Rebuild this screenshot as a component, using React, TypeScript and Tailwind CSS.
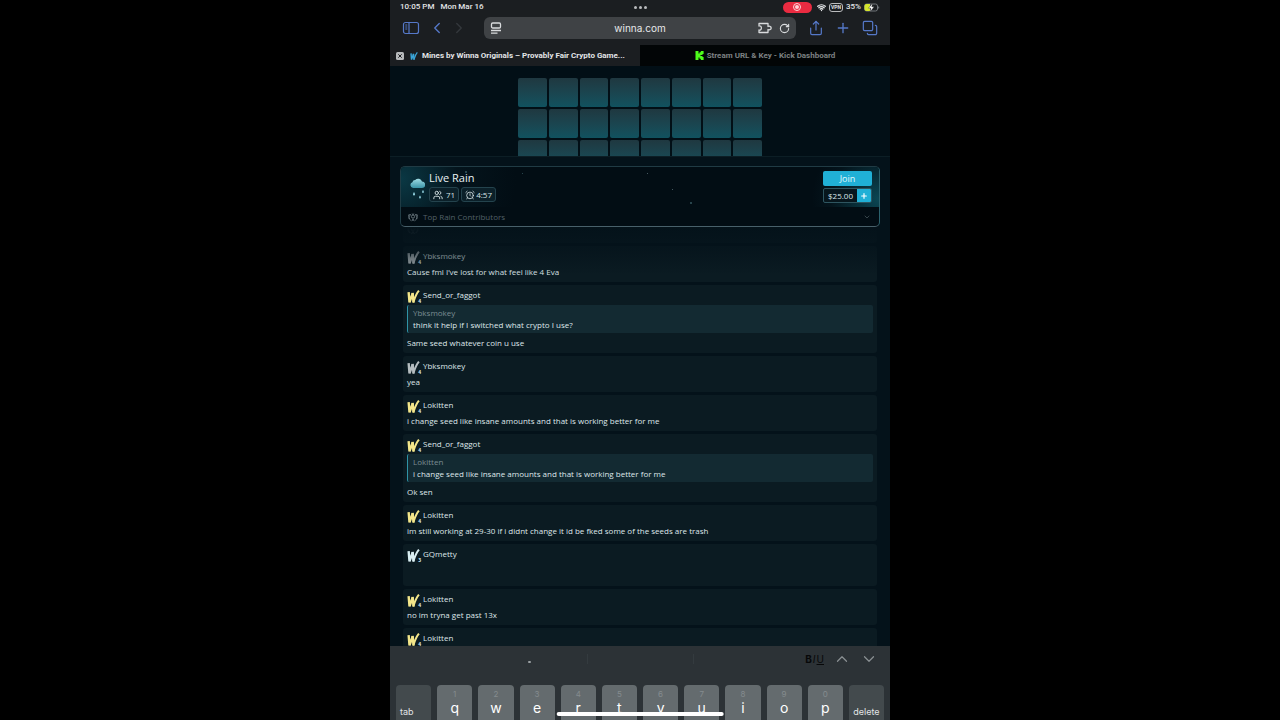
import React, { FC } from 'react';
import {
  AlarmClock,
  ChevronDown,
  ChevronLeft,
  ChevronRight,
  ChevronUp,
  Copy,
  Plus,
  RotateCw,
  Share,
  Users,
  Wifi,
} from 'lucide-react';

type Message = {
  id: number;
  name: string;
  color: string;
  level: string;
  text: string;
  quote?: { name: string; text: string };
};

const messages: Message[] = [
  { id: 1, name: 'Ybksmokey', color: '#b4bcbf', level: '4', text: 'Cause fml I’ve lost for what feel like 4 Eva' },
  {
    id: 2,
    name: 'Send_or_faggot',
    color: '#f3e68a',
    level: '4',
    text: 'Same seed whatever coin u use',
    quote: { name: 'Ybksmokey', text: 'think it help if I switched what crypto I use?' },
  },
  { id: 3, name: 'Ybksmokey', color: '#b4bcbf', level: '4', text: 'yea' },
  { id: 4, name: 'Lokitten', color: '#f3e68a', level: '4', text: 'i change seed like insane amounts and that is working better for me' },
  {
    id: 5,
    name: 'Send_or_faggot',
    color: '#f3e68a',
    level: '4',
    text: 'Ok sen',
    quote: { name: 'Lokitten', text: 'i change seed like insane amounts and that is working better for me' },
  },
  {
    id: 6,
    name: 'Lokitten',
    color: '#f3e68a',
    level: '4',
    text: 'im still working at 29-30 if i didnt change it id be fked some of the seeds are trash',
  },
  { id: 7, name: 'GQmetty', color: '#d9eef2', level: '3', text: '' },
  { id: 8, name: 'Lokitten', color: '#f3e68a', level: '4', text: 'no im tryna get past 13x' },
  { id: 9, name: 'Lokitten', color: '#f3e68a', level: '4', text: '' },
];

const keys = ['q', 'w', 'e', 'r', 't', 'y', 'u', 'i', 'o', 'p'];
const tiles = Array.from({ length: 24 }, (_, i) => i);

const WinnaMark: FC<{ color: string; className?: string }> = ({ color, className }) => (
  <svg viewBox="0 0 12 12" className={className} fill="none" stroke={color} strokeLinejoin="bevel">
    <path d="M1.500 2 2.300 11.400 5.300 3" strokeWidth="2.200" />
    <path d="M5.200 2.600 6 11.400" strokeWidth="2.200" />
    <path d="M5.800 11.600C7 8 8 4 11 .6" strokeWidth="1.900" />
  </svg>
);

const KickMark: FC = () => (
  <svg viewBox="0 0 9 9" className="size-[9px]" fill="#4dfb1a">
    <rect x="0.500" y="0" width="3" height="9" />
    <rect x="3" y="2.500" width="2.500" height="4" />
    <rect x="4.500" y="1.200" width="3" height="2.800" />
    <rect x="4.500" y="5" width="3" height="2.800" />
    <rect x="5.800" y="0" width="2.800" height="3" />
    <rect x="5.800" y="6" width="2.800" height="3" />
  </svg>
);

const RainCloud: FC = () => (
  <svg viewBox="0 0 16 24" className="h-6 w-4 shrink-0">
    <defs>
      <linearGradient id="cloud" x1="0" y1="0" x2="0" y2="1">
        <stop offset="0" stopColor="#9fdce4" />
        <stop offset="1" stopColor="#3a95a8" />
      </linearGradient>
    </defs>
    <path d="M4 13A3 3 0 0 1 3.400 7.200 2.800 2.800 0 0 1 6.200 5 4 4 0 0 1 13 6.600 3.200 3.200 0 0 1 13 13Z" fill="url(#cloud)" />
    <path d="M5 17c1.300 1.800 1.300 3.400 0 3.600-1.300-.2-1.200-1.800 0-3.600ZM14 15c1.100 1.600 1.100 2.800 0 3-1.100-.2-1.100-1.400 0-3ZM11 20.500c1.100 1.600 1.100 2.800 0 3-1.100-.2-1.100-1.400 0-3Z" fill="#9adcea" />
  </svg>
);

const Laurel: FC<{ className?: string }> = ({ className }) => (
  <svg viewBox="0 0 12 12" className={className} fill="none" stroke="#65737a" strokeWidth="1.200">
    <circle cx="6" cy="5.500" r="1.900" />
    <path d="M4.500 11 6 8.500 7.500 11M3.400 10C.8 8.800.6 5 1.600 2.400M8.600 10c2.600-1.200 2.800-5 1.800-7.600" />
    <path d="M.4 4.400 2 5.200M.6 7.200l1.800.2M11.600 4.400 10 5.200M11.400 7.200l-1.800.2M3 2.500l-.6 2M9 2.500l.6 2M4.600 2.200 6 3l1.400-.8" />
  </svg>
);

const StatusBar: FC = () => (
  <div className="grid h-[14px] grid-cols-3 items-center px-[10px] text-[8px] leading-none font-medium text-[#e4e6e8]">
    <div className="flex gap-[6px] font-['Roboto','Liberation_Sans',sans-serif]">
      <span>10:05 PM</span>
      <span>Mon Mar 16</span>
    </div>
    <div className="flex justify-center gap-[2px]">
      <span className="size-[3px] rounded-full bg-[#b9bbbd]" />
      <span className="size-[3px] rounded-full bg-[#b9bbbd]" />
      <span className="size-[3px] rounded-full bg-[#b9bbbd]" />
    </div>
    <div className="flex items-center justify-end gap-[3px] font-['Roboto','Liberation_Sans',sans-serif]">
      <span className="mr-[2px] flex h-[11px] w-[29px] items-center justify-center rounded-full bg-[#ea2b41]">
        <span className="flex size-2 items-center justify-center rounded-full border border-[#ffd3d8]">
          <span className="size-1 rounded-full bg-[#ffd3d8]" />
        </span>
      </span>
      <Wifi className="size-[9px]" strokeWidth={3.5} />
      <span className="rounded-[3px] border border-[#b9bbbd] px-px py-px text-[5px] leading-none font-bold">VPN</span>
      <span>35%</span>
      <svg viewBox="0 0 16 9" className="h-[9px] w-4">
        <rect x=".5" y="1" width="13" height="7" rx="2" fill="none" stroke="#70757a" />
        <path d="M2.500 1H6v7H2.500a2 2 0 0 1-2-2V3a2 2 0 0 1 2-2Z" fill="#d5e62c" />
        <path d="M8.600 0 4.500 5.200h2.300L6 9l4.200-5.200H7.800Z" fill="#fff" stroke="#1b1e21" strokeWidth=".4" />
        <path d="M14.700 3.500v2" stroke="#70757a" />
      </svg>
    </div>
  </div>
);

const Toolbar: FC = () => (
  <div className="flex h-[31px] items-center px-3 pb-[3px] text-[#5578c8]">
    <button aria-label="Sidebar">
      <svg viewBox="0 0 18 14" className="h-[14px] w-[18px]" fill="none" stroke="currentColor" strokeWidth="1.200">
        <rect x="1.500" y="1.500" width="15" height="11" rx="2" />
        <path d="M7 1.500v11M3.300 4h2M3.300 6h2M3.300 8h2" />
      </svg>
    </button>
    <button aria-label="Back" className="ml-2">
      <ChevronLeft className="size-[18px]" strokeWidth={1.8} />
    </button>
    <button aria-label="Forward" className="ml-1 text-[#34383c]">
      <ChevronRight className="size-[18px]" strokeWidth={1.8} />
    </button>
    <div className="mr-3 ml-4 flex h-[22px] flex-1 items-center rounded-md bg-[#3f4245] px-[6px] text-[#d9dbdd]">
      <svg viewBox="0 0 12 12" className="size-3" fill="none" stroke="currentColor" strokeWidth="1.300">
        <rect x="1.500" y="1" width="9" height="5" rx="1.200" />
        <path d="M1 8.500h10M1 11.200h6.500" />
      </svg>
      <input
        aria-label="Address"
        defaultValue="winna.com"
        className="min-w-0 flex-1 bg-transparent pl-5 text-center text-[10px] text-[#e6e8ea] outline-none"
      />
      <svg viewBox="0 0 14 12" className="h-3 w-[14px]" fill="none" stroke="currentColor" strokeWidth="1.300" strokeLinejoin="round">
        <path d="M1 1.500h9v3c.8-.5 3.200-.6 3.200 1.500s-2.400 2-3.200 1.500v3H1V8c1.400.4 2.400-.6 2.400-2S2.400 3.600 1 4Z" />
      </svg>
      <button aria-label="Reload" className="ml-[7px]">
        <RotateCw className="size-[11px]" strokeWidth={2.5} />
      </button>
    </div>
    <div className="flex gap-[11px]">
      <button aria-label="Share">
        <Share className="size-4" strokeWidth={1.8} />
      </button>
      <button aria-label="New tab">
        <Plus className="size-4" strokeWidth={2} />
      </button>
      <button aria-label="All tabs">
        <Copy className="size-4 rotate-180" strokeWidth={1.8} />
      </button>
    </div>
  </div>
);

const Tabs: FC = () => (
  <div className="grid h-[21px] grid-cols-2 font-['Roboto','Liberation_Sans',sans-serif] text-[8px] leading-none font-bold">
    <button className="flex items-center px-[6px] text-[#e3e5e7]">
      <svg viewBox="0 0 8 8" className="size-2 shrink-0">
        <rect width="8" height="8" rx="1.500" fill="#b7babc" />
        <path d="m2.300 2.300 3.400 3.400m0-3.400L2.300 5.700" stroke="#1b1e21" />
      </svg>
      <WinnaMark color="#3aa5d8" className="mr-1 ml-[6px] size-2 shrink-0" />
      <span className="whitespace-nowrap">Mines by Winna Originals – Provably Fair Crypto Game...</span>
    </button>
    <button className="flex items-center justify-center gap-[3px] bg-[#020506] text-[#7d8183]">
      <KickMark />
      <span>Stream URL &amp; Key - Kick Dashboard</span>
    </button>
  </div>
);

const RainPanel: FC = () => (
  <section className="relative overflow-hidden rounded-[5px] border border-[#203b44] border-r-[#2c626d] border-b-[#48606a] bg-[#020d14]">
    <div className="flex h-10 items-start justify-between bg-[radial-gradient(circle_at_0%_30%,#0a3844_0%,#04141c_12%,transparent_24%),radial-gradient(circle_at_100%_80%,#0b4653_0%,#04141c_10%,transparent_14%)] pr-[7px] pl-2">
      <div className="flex gap-1 pt-2">
        <RainCloud />
        <div className="-mt-1">
          <h2 className="text-[11px] leading-[14px] text-[#e9f1f3]">Live Rain</h2>
          <div className="mt-[2px] flex gap-[2px] text-[8px] leading-none text-[#d6e2e5]">
            <span className="flex h-[15px] items-center gap-[3px] rounded-[3px] border border-[#24434d] bg-[#0b2029] px-[3px]">
              <Users className="size-[10px]" strokeWidth={2.2} />
              71
            </span>
            <span className="flex h-[15px] items-center gap-px rounded-[3px] border border-[#24434d] bg-[#0b2029] px-[3px]">
              <AlarmClock className="size-[10px]" strokeWidth={2} />
              4:57
            </span>
          </div>
        </div>
      </div>
      <div className="flex w-[49px] flex-col gap-[2px] pt-1">
        <button className="h-[15px] rounded-[2px] bg-[#20b0d6] text-[9px] leading-none font-medium text-[#e3fbff]">Join</button>
        <div className="flex h-[15px] overflow-hidden rounded-[2px] border border-[#2e5560] bg-[#07161d]">
          <span className="flex flex-1 items-center justify-center text-[8px] leading-none text-[#dbe6e9]">$25.00</span>
          <button aria-label="Add" className="flex w-[14px] items-center justify-center bg-[#20b0d6] text-white">
            <Plus className="size-2" strokeWidth={3.5} />
          </button>
        </div>
      </div>
    </div>
    <button className="flex h-[19px] w-full items-center gap-[5px] px-[7px] text-[8px] text-[#526067]">
      <Laurel className="size-[10px]" />
      Top Rain Contributors
      <ChevronDown className="mr-px ml-auto size-2" />
    </button>
    <i className="absolute top-1 left-[64px] size-[2px] rounded-full bg-[#36575f]" />
    <i className="absolute top-[6px] left-[121px] size-px rounded-full bg-[#36575f]" />
    <i className="absolute top-[6px] left-[246px] size-px rounded-full bg-[#5c7379]" />
    <i className="absolute top-[22px] left-[271px] size-px rounded-full bg-[#5c7379]" />
    <i className="absolute top-[35px] left-[289px] size-[2px] rounded-full bg-[#36575f]" />
  </section>
);

const MessageCard: FC<{ message: Message }> = ({ message }) => (
  <li className="flex flex-col gap-1 rounded-[3px] bg-[#0b1b22] p-1 text-[8px] leading-3 text-[#dfe7ea]">
    <div className="flex h-3 items-center gap-[3px]">
      <span className="relative mt-[3px] size-[13px]">
        <WinnaMark color={message.color} className="size-[13px]" />
        <span className="absolute -right-px -bottom-px text-[5px] leading-[5px] font-bold">{message.level}</span>
      </span>
      <span>{message.name}</span>
    </div>
    {message.quote && (
      <blockquote className="rounded-[2px] border-l border-[#2f93a6] bg-[#132a32] px-[5px] py-[2px]">
        <p className="text-[#7c8d93]">{message.quote.name}</p>
        <p>{message.quote.text}</p>
      </blockquote>
    )}
    <p className={message.text ? 'h-3' : 'h-[18px]'}>{message.text}</p>
  </li>
);

const Keyboard: FC = () => (
  <div className="relative h-[74px] shrink-0 overflow-hidden bg-[#2c3236]">
    <div className="flex h-[39px] items-start justify-end pt-1 pr-3 text-[#8a9093]">
      <div className="flex h-[18px] items-center gap-[9px]">
        <div className="flex gap-px text-[10px] leading-none text-[#070809]">
          <button className="font-bold">B</button>
          <button className="italic">I</button>
          <button className="underline">U</button>
        </div>
        <button aria-label="Previous field">
          <ChevronUp className="size-[18px]" strokeWidth={1.6} />
        </button>
        <button aria-label="Next field">
          <ChevronDown className="size-[18px]" strokeWidth={1.6} />
        </button>
      </div>
    </div>
    <i className="absolute top-[15px] left-[138px] h-[2px] w-[3px] rounded-full bg-[#9aa0a3]" />
    <i className="absolute top-2 left-[197px] h-[10px] w-px bg-[#343b3f]" />
    <i className="absolute top-2 left-[303px] h-[10px] w-px bg-[#343b3f]" />
    <div className="grid grid-cols-12 gap-[6px] px-[6px]">
      <button className="flex h-10 items-end rounded-[4px] bg-[#434a4d] pb-[9px] pl-1 text-[9px] leading-none text-[#e2e5e6]">tab</button>
      {keys.map((key, i) => (
        <button key={key} className="flex h-10 flex-col items-center rounded-[4px] bg-[#646b6e] pt-[5px] text-white">
          <span className="text-[8px] leading-[9px] text-[#858c8f]">{(i + 1) % 10}</span>
          <span className="text-[14px] leading-[18px]">{key}</span>
        </button>
      ))}
      <button className="flex h-10 items-end justify-center rounded-[4px] bg-[#434a4d] pb-[9px] text-[9px] leading-none text-[#e2e5e6]">delete</button>
    </div>
    <div className="absolute bottom-[4px] left-1/2 h-1 w-1/3 -translate-x-1/2 rounded-full bg-white" />
  </div>
);

const App: FC = () => {
  return (
    <div className="flex h-screen justify-center overflow-hidden bg-black font-['Inter','Liberation_Sans',sans-serif]">
      <main className="flex aspect-[25/36] h-full flex-col overflow-hidden bg-[#04121a]">
        <header className="shrink-0 bg-[#1b1e21]">
          <StatusBar />
          <Toolbar />
          <Tabs />
        </header>
        <div className="h-[91px] shrink-0 overflow-hidden border-b border-[#0c1e25] bg-[#020f16] pt-3">
          <div className="mx-auto grid w-[244px] grid-cols-8 gap-[2px]">
            {tiles.map((tile) => (
              <button
                key={tile}
                aria-label={`Tile ${tile + 1}`}
                className="aspect-square rounded-[2px] bg-linear-to-b from-[#1f3840] to-[#10525f]"
              />
            ))}
          </div>
        </div>
        <div className="flex min-h-0 flex-1 flex-col px-[10px] pt-[9px] font-['Open_Sans','Liberation_Sans',sans-serif]">
          <RainPanel />
          <div className="relative min-h-0 flex-1 overflow-hidden px-[3px]">
            <div className="h-5 rounded-b-[3px] bg-[#0b1b22] px-1">
              <Laurel className="-mt-1 size-3" />
            </div>
            <ul className="mt-[3px] flex flex-col gap-[3px]">
              {messages.map((message) => (
                <MessageCard key={message.id} message={message} />
              ))}
            </ul>
            <div className="pointer-events-none absolute inset-x-0 top-0 h-12 bg-linear-to-b from-[#04121a] via-[#04121a]/60 to-transparent" />
          </div>
        </div>
        <Keyboard />
      </main>
    </div>
  );
};

export default App;
